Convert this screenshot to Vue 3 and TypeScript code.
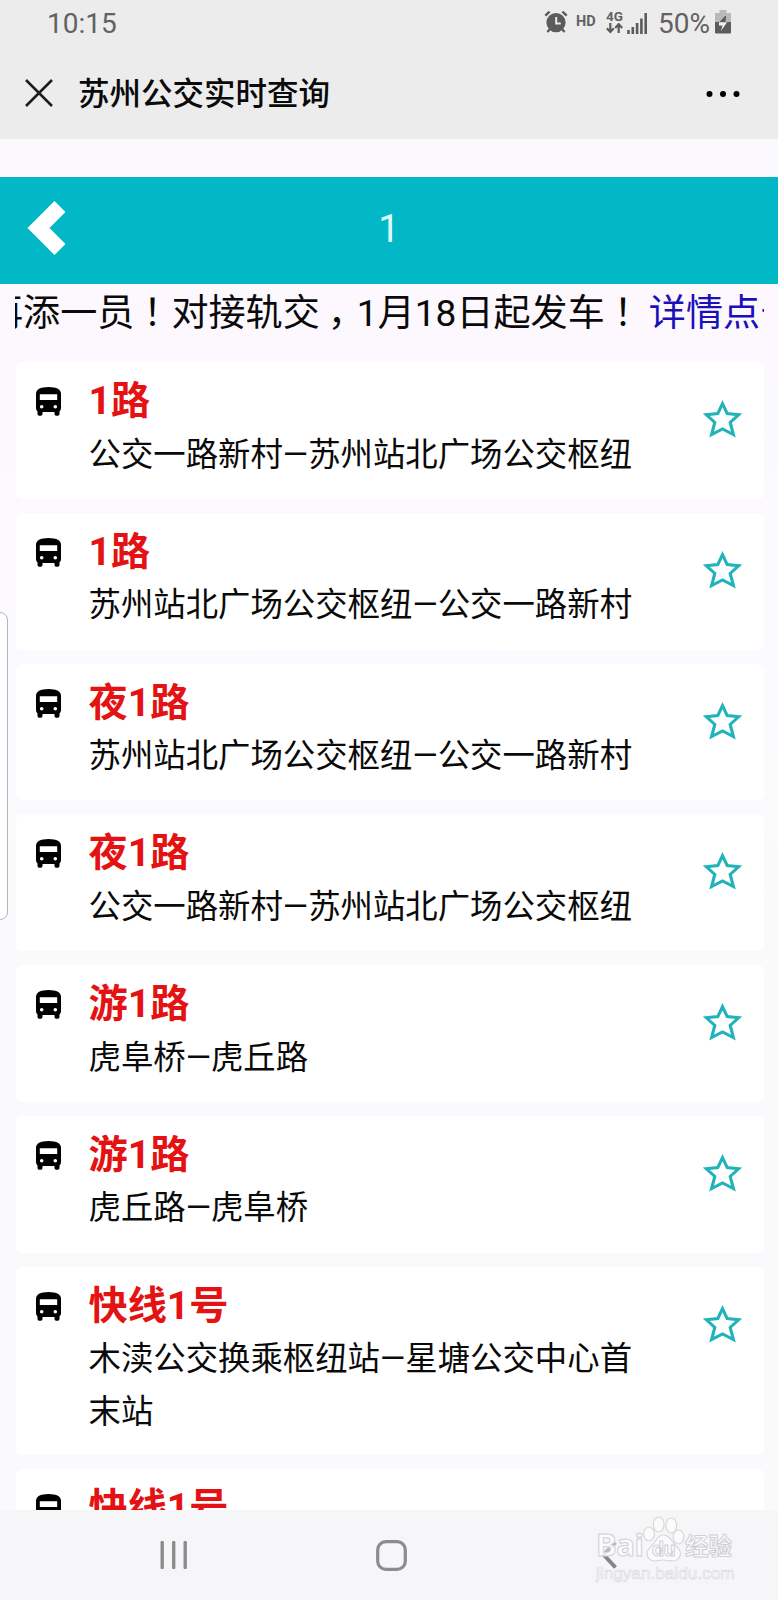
<script setup lang="ts">
interface Route {
  id: number
  name: string
  path: string
}

const routes: Route[] = [
  { id: 1, name: '1路', path: '公交一路新村—苏州站北广场公交枢纽' },
  { id: 2, name: '1路', path: '苏州站北广场公交枢纽—公交一路新村' },
  { id: 3, name: '夜1路', path: '苏州站北广场公交枢纽—公交一路新村' },
  { id: 4, name: '夜1路', path: '公交一路新村—苏州站北广场公交枢纽' },
  { id: 5, name: '游1路', path: '虎阜桥—虎丘路' },
  { id: 6, name: '游1路', path: '虎丘路—虎阜桥' },
  { id: 7, name: '快线1号', path: '木渎公交换乘枢纽站—星塘公交中心首末站' },
  { id: 8, name: '快线1号', path: '' },
]
</script>

<template>
  <div class="phone">
    <header class="top">
      <div class="status">
        <span class="clock">10:15</span>
        <svg class="alarm" width="24" height="24" viewBox="0 0 24 24">
          <circle cx="12" cy="12.6" r="9.6" fill="#5c5c5c" />
          <path d="M1.3 5.6 5.6 1.6M22.7 5.6 18.4 1.6M5.8 19.2 3.4 22M18.2 19.2 20.6 22" stroke="#5c5c5c" stroke-width="2.4" fill="none" />
          <path d="M12.2 7v6.6h4.6" stroke="#ececec" stroke-width="2" fill="none" />
        </svg>
        <span class="hd">HD</span>
        <span class="net">
          <span class="gen">4G</span>
          <svg width="17" height="11" viewBox="0 0 17 11">
            <path d="M4.3 0v8.4M.8 5.2l3.5 3.8 3.5-3.8M12.7 10V1.8M9.2 5l3.5-3.8L16.2 5" stroke="#5c5c5c" stroke-width="2.2" fill="none" />
          </svg>
        </span>
        <svg class="signal" width="21" height="21" viewBox="0 0 21 21">
          <path d="M1.5 17v4M5.8 14v7M10.1 10v11M14.4 5.5V21M18.7 0v21" stroke="#5c5c5c" stroke-width="2.6" />
        </svg>
        <span class="percent">50%</span>
        <svg class="battery" width="16" height="24" viewBox="0 0 16 24">
          <path d="M4.5 0h7v3H16v9H0V3h4.5z" fill="#b9b9b9" />
          <path d="M0 12h16v10.5q0 1-1 1H1q-1 0-1-1z" fill="#5c5c5c" />
          <path d="M10 6 4 12.600h6.500L11 6z" fill="#5c5c5c" />
          <path d="M4 12.300h8L6 21l1.500-5.500H4z" fill="#f0f0f0" />
        </svg>
      </div>
      <div class="titlebar">
        <svg class="close" width="28" height="28" viewBox="0 0 28 28">
          <path d="M1 1 27 27M27 1 1 27" stroke="#1c1c1c" stroke-width="2.5" />
        </svg>
        <h1>苏州公交实时查询</h1>
        <svg class="more" width="34" height="8" viewBox="0 0 34 8">
          <circle cx="3.5" cy="4" r="3" />
          <circle cx="17" cy="4" r="3" />
          <circle cx="30.5" cy="4" r="3" />
        </svg>
      </div>
    </header>

    <div class="searchbar">
      <svg class="back" width="40" height="56" viewBox="0 0 40 56">
        <path d="M27.5 1 38.5 12 22.5 28 38.5 44 27.5 55 .5 28z" fill="#fff" />
      </svg>
      <span class="keyword">1</span>
    </div>

    <div class="notice">
      <div class="track">再添一员<span class="mark">！</span>对接轨交<span class="mark comma">，</span>1月18日起发车<span class="mark">！</span><a class="link">详情点击</a></div>
    </div>

    <main class="list">
      <article v-for="route in routes" :key="route.id" class="card">
        <svg class="bus" width="25" height="29" viewBox="0 0 25 29">
          <path fill-rule="evenodd" d="M0 7Q0 0 12.500 0T25 7v14q0 2.500-1.500 3.500V27q0 1.700-1.700 1.700h-1.600q-1.700 0-1.700-1.700v-2H6.500v2q0 1.700-1.700 1.700H3.200Q1.500 28.700 1.500 27v-2.500Q0 23.500 0 21zM3.800 7.200V13h17.400V7.200zM5.700 18a1.800 1.800 0 1 0 0 3.600 1.800 1.800 0 0 0 0-3.600zM19.300 18a1.800 1.800 0 1 0 0 3.600 1.800 1.800 0 0 0 0-3.600z" />
        </svg>
        <div class="info">
          <h2>{{ route.name }}</h2>
          <p>{{ route.path }}</p>
        </div>
        <svg v-if="route.path" class="star" width="39" height="38" viewBox="0 0 39 38">
          <path d="M19.500 3.600 24.200 13.600 35.600 14.800 27.200 22.400 30.400 34.600 19.500 28.900 8.600 34.600 11.800 22.400 3.400 14.800 14.800 13.600z" fill="none" stroke="#20b3b9" stroke-width="3.100" />
        </svg>
      </article>
    </main>

    <nav class="nav">
      <svg class="recents" width="28" height="28" viewBox="0 0 28 28">
        <path d="M2.200 1.500v25M13.700 1.500v25M25.200 1.500v25" stroke="#8c8c8c" stroke-width="3.400" stroke-linecap="round" />
      </svg>
      <svg class="home" width="31" height="31" viewBox="0 0 31 31">
        <rect x="1.700" y="1.700" width="27.600" height="27.600" rx="8" fill="none" stroke="#8c8c8c" stroke-width="3.200" />
      </svg>
      <svg class="return" width="18" height="28" viewBox="0 0 18 28">
        <path d="M15.500 1.500 3 14" fill="none" stroke="#b4b4b6" stroke-width="3.600" />
        <path d="M3 13 15.500 26.500" fill="none" stroke="#858585" stroke-width="4" />
      </svg>
    </nav>

    <div class="handle"></div>

    <div class="watermark">
      <div class="brand">
        <span class="bai">Bai</span>
        <span class="paw">
          <svg width="42" height="46" viewBox="0 0 42 46">
            <g fill="#fbfbfc" stroke="#d8d8db" stroke-width="1.200">
              <ellipse cx="6" cy="18" rx="5.400" ry="7" />
              <ellipse cx="15.700" cy="8.500" rx="5.400" ry="7.500" />
              <ellipse cx="28.300" cy="9.500" rx="5.400" ry="7.500" />
              <ellipse cx="35.500" cy="21" rx="5.400" ry="7" />
              <path d="M20.500 19c5 0 7 4 10 8s7 6 7 10.500c0 5-4 7.500-8 7.500-3 0-5-1-9-1s-6 1-9 1c-4 0-7.500-3-7.500-7.500C4 33 8 31 11 27s4.500-8 9.500-8z" />
            </g>
          </svg>
          <span class="du">du</span>
        </span>
        <span class="exp">经验</span>
      </div>
      <div class="site">jingyan.baidu.com</div>
    </div>
  </div>
</template>

<style>
body {
  margin: 0;
}
</style>

<style scoped>
.phone {
  position: relative;
  display: flex;
  flex-direction: column;
  width: 778px;
  height: 1600px;
  overflow: hidden;
  background: linear-gradient(180deg, #fbf9fe 0, #fbf9fe 160px, #fcf8fe 290px, #fcfafe 560px, #fafafd 900px, #fafafd 1500px);
  font-family: Roboto, 'Noto Sans CJK SC', sans-serif;
  color: #0a0a0a;
}
.top {
  flex: none;
  height: 139px;
  background: #ececec;
}
.status {
  display: flex;
  align-items: center;
  height: 46px;
  padding-left: 47px;
  color: #626262;
}
.clock {
  width: 497px;
  padding-top: 2px;
  font-size: 28px;
  line-height: 46px;
}
.alarm {
  flex: none;
  margin-top: -2px;
}
.hd {
  width: 30px;
  margin-left: 8px;
  margin-top: -4px;
  font-size: 14.5px;
  font-weight: 700;
}
.net {
  display: flex;
  flex-direction: column;
  width: 21px;
  margin-top: -2px;
}
.gen {
  font-size: 13.5px;
  line-height: 13px;
  font-weight: 700;
}
.percent {
  width: 57px;
  margin-left: 10px;
  font-size: 28px;
}
.battery {
  margin-top: -2px;
}
.signal {
  flex: none;
}
.titlebar {
  display: flex;
  align-items: center;
  height: 94px;
}
.close {
  margin-left: 25px;
}
.titlebar h1 {
  flex: 1;
  margin: 3px 0 0 25px;
  font-size: 31.5px;
  font-weight: 500;
  line-height: 46px;
}
.more {
  margin: 1px 38px 0 0;
}
.searchbar {
  flex: none;
  display: grid;
  grid-template-columns: 67px 1fr 67px;
  align-items: center;
  height: 107px;
  margin-top: 38px;
  background: #02b8c7;
}
.back {
  margin: -6px 0 0 27px;
}
.keyword {
  margin-top: -4px;
  font-size: 38px;
  line-height: 50px;
  text-align: center;
  color: #e0fbfd;
}
.notice {
  flex: none;
  height: 78px;
  margin: 0 14px 0 15px;
  overflow: hidden;
}
.track {
  margin-left: -29px;
  padding-top: 2px;
  font-size: 37.1px;
  line-height: 56px;
  white-space: nowrap;
}
.mark {
  display: inline-block;
  box-sizing: border-box;
  width: 1em;
  padding-left: 9px;
}
.mark.comma {
  padding-left: 8px;
}
.link {
  margin-left: 7px;
  color: #1a0fb8;
}
.list {
  flex: 1;
  min-height: 0;
  overflow: hidden;
  padding: 0 14px 0 16px;
}
.card {
  display: flex;
  align-items: flex-start;
  box-sizing: border-box;
  min-height: 136.8px;
  margin-bottom: 14px;
  padding: 0 22px 17.5px 19.5px;
  border-radius: 6px;
  background: #fff;
}
.bus {
  flex: none;
  margin-top: 25px;
}
.info {
  width: 556px;
  margin-left: 28px;
  padding-top: 13px;
}
.info h2 {
  margin: 0;
  font-size: 39.2px;
  line-height: 53px;
  font-weight: 700;
  color: #e41212;
}
.info p {
  margin: 0;
  padding-top: 0.5px;
  font-size: 32.4px;
  line-height: 52.3px;
}
.star {
  flex: none;
  margin: 38px 0 0 auto;
}
.nav {
  flex: none;
  display: flex;
  align-items: center;
  height: 90px;
  background: #f6f6f8;
}
.recents {
  margin-left: 160px;
}
.home {
  margin-left: 188px;
}
.return {
  margin-left: 193px;
}
.handle {
  position: absolute;
  left: -12px;
  top: 612px;
  width: 18px;
  height: 306px;
  border: 1px solid #b4b4b6;
  border-radius: 8px;
  background: #fff;
}
.watermark {
  position: absolute;
  left: 596px;
  top: 1516px;
  width: 145px;
}
.brand {
  display: flex;
  align-items: flex-end;
  height: 46px;
}
.bai,
.exp,
.du {
  color: rgba(253, 253, 254, 0.85);
  -webkit-text-stroke: 1px #d0d0d4;
  font-weight: 700;
}
.bai {
  width: 47px;
  font-family: 'Open Sans', sans-serif;
  font-size: 31px;
  line-height: 36px;
  letter-spacing: -0.5px;
}
.paw {
  position: relative;
  width: 42px;
  height: 46px;
}
.du {
  position: absolute;
  left: 9px;
  top: 21px;
  font-size: 21px;
  line-height: 24px;
}
.exp {
  font-size: 23.5px;
  line-height: 30px;
}
.site {
  font-family: 'Liberation Sans', sans-serif;
  font-size: 17.2px;
  line-height: 22px;
  color: #f9f9fa;
  -webkit-text-stroke: 0.7px #dcdcdf;
}
</style>
